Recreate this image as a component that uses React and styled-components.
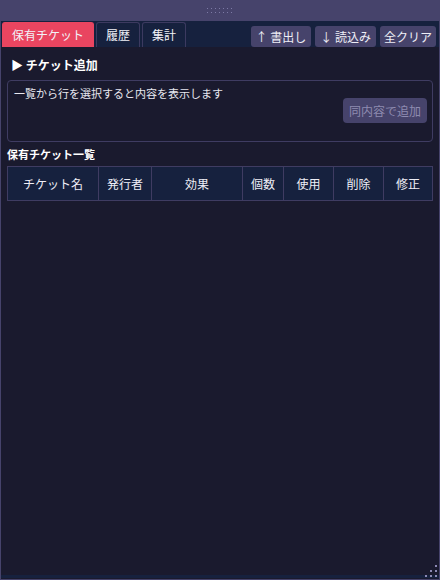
import React from 'react';
import styled, { createGlobalStyle } from 'styled-components';

const GlobalStyle = createGlobalStyle`
  html, body {
    margin: 0;
    padding: 0;
    background: #1a1a2e;
  }
  body {
    font-family: "Noto Sans CJK JP", "Noto Sans", sans-serif;
    color: #e8e8f0;
  }
`;

const Window = styled.div`
  position: relative;
  box-sizing: border-box;
  width: 440px;
  height: 580px;
  display: flex;
  flex-direction: column;
  border: 1px solid #46436b;
  border-top: none;
  background: #1a1a2e;
`;

const TitleBar = styled.div`
  height: 21px;
  flex: none;
  background: #46436b;
  display: flex;
  align-items: center;
  justify-content: center;
`;

const TabBar = styled.div`
  height: 26px;
  flex: none;
  background: #16213e;
  display: flex;
  align-items: flex-end;
  padding: 0 3px 0 1px;
`;

const Tab = styled.button`
  box-sizing: border-box;
  height: 25px;
  margin-right: 2px;
  padding: 0 9px;
  border: 1px solid ${props => (props.active ? '#e94560' : '#3c3a60')};
  border-bottom: none;
  border-radius: 3px 3px 0 0;
  background: ${props => (props.active ? '#e94560' : '#16213e')};
  color: #f2f2f8;
  font-family: inherit;
  font-size: 12px;
  line-height: 22px;
  cursor: pointer;
`;

const Spacer = styled.div`
  flex: 1;
`;

const ToolButton = styled.button`
  box-sizing: border-box;
  height: 21px;
  margin-left: 4px;
  padding: 0 ${props => props.pad || 5}px;
  border: none;
  border-radius: 3px;
  background: #46436b;
  color: #eeeef6;
  font-family: inherit;
  font-size: 12px;
  line-height: 21px;
  cursor: pointer;
`;

const Body = styled.div`
  flex: 1;
  padding: 0 6px;
  display: flex;
  flex-direction: column;
`;

const SectionToggle = styled.div`
  margin: 10px 0 0 4px;
  height: 16px;
  font-size: 12px;
  font-weight: 700;
  line-height: 16px;
  color: #ffffff;
`;

const DetailBox = styled.div`
  box-sizing: border-box;
  margin-top: 7px;
  height: 62px;
  border: 1px solid #3f3c62;
  border-radius: 4px;
  padding: 5px 5px 0 6px;
  display: flex;
  flex-direction: column;
`;

const Hint = styled.div`
  font-size: 11px;
  line-height: 14px;
  color: #e8e8f0;
`;

const AddButton = styled.button`
  align-self: flex-end;
  margin-top: -2px;
  height: 25px;
  padding: 0 6px;
  border: none;
  border-radius: 4px;
  background: #46436b;
  color: #8e8bb0;
  font-family: inherit;
  font-size: 12px;
`;

const ListTitle = styled.div`
  margin-top: 4px;
  font-size: 11px;
  font-weight: 700;
  line-height: 16px;
  color: #ffffff;
`;

const Table = styled.table`
  margin-top: 4px;
  width: 100%;
  border-collapse: collapse;
  table-layout: fixed;
`;

const Col = styled.col`
  width: ${props => props.w}px;
`;

const Th = styled.th`
  height: 33px;
  padding: 0;
  border: 1px solid #3f3c62;
  background: #16213e;
  color: #eeeef6;
  font-size: 12px;
  font-weight: 400;
  text-align: center;
`;

const Footer = styled.div`
  height: 3px;
  flex: none;
  margin-bottom: 1px;
  background: #16213e;
`;

const ResizeGrip = styled.svg`
  position: absolute;
  right: 1px;
  bottom: 1px;
`;

const GripDots = () => (
  <svg width="28" height="8" viewBox="0 0 28 8">
    {[0, 1, 2, 3, 4, 5, 6].map(i => (
      <g key={i} fill="#7d7aa6">
        <rect x={1 + i * 4} y={1} width="1" height="1" />
        <rect x={1 + i * 4} y={5} width="1" height="1" />
      </g>
    ))}
  </svg>
);

const columns = [
  { label: 'チケット名', w: 91 },
  { label: '発行者', w: 53 },
  { label: '効果', w: 91 },
  { label: '個数', w: 41 },
  { label: '使用', w: 50 },
  { label: '削除', w: 50 },
  { label: '修正', w: 49 },
];

const App = () => (
  <>
    <GlobalStyle />
    <Window>
      <TitleBar>
        <GripDots />
      </TitleBar>

      <TabBar>
        <Tab active>保有チケット</Tab>
        <Tab>履歴</Tab>
        <Tab>集計</Tab>
        <Spacer />
        <ToolButton>↑ 書出し</ToolButton>
        <ToolButton>↓ 読込み</ToolButton>
        <ToolButton pad={4}>全クリア</ToolButton>
      </TabBar>

      <Body>
        <SectionToggle>▶ チケット追加</SectionToggle>

        <DetailBox>
          <Hint>一覧から行を選択すると内容を表示します</Hint>
          <AddButton disabled>同内容で追加</AddButton>
        </DetailBox>

        <ListTitle>保有チケット一覧</ListTitle>

        <Table>
          <colgroup>
            {columns.map(col => (
              <Col key={col.label} w={col.w} />
            ))}
          </colgroup>
          <thead>
            <tr>
              {columns.map(col => (
                <Th key={col.label}>{col.label}</Th>
              ))}
            </tr>
          </thead>
        </Table>
      </Body>

      <Footer />

      <ResizeGrip width="14" height="14" viewBox="0 0 14 14">
        <g fill="#8c89b4">
          <rect x="11" y="1" width="2" height="2" />
          <rect x="6" y="6" width="2" height="2" />
          <rect x="11" y="6" width="2" height="2" />
          <rect x="1" y="11" width="2" height="2" />
          <rect x="6" y="11" width="2" height="2" />
          <rect x="11" y="11" width="2" height="2" />
        </g>
      </ResizeGrip>
    </Window>
  </>
);

export default App;
